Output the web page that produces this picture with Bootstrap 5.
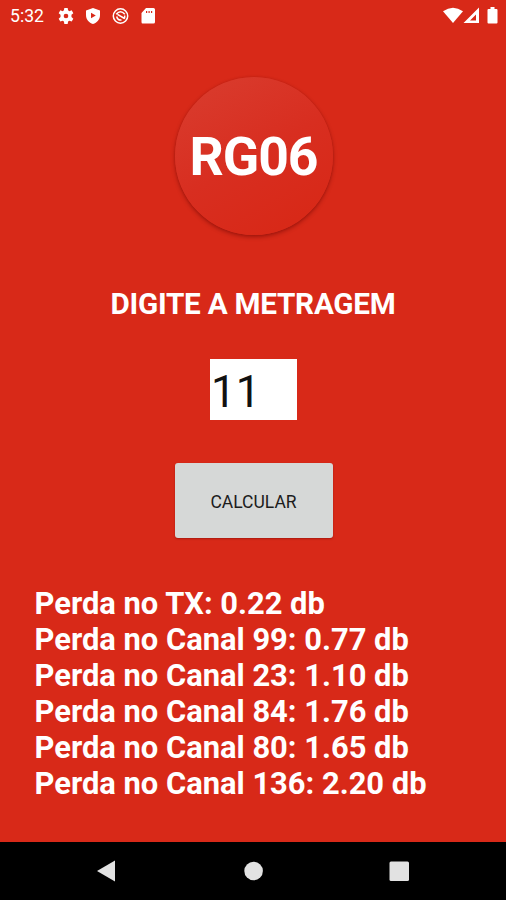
<!DOCTYPE html>
<html lang="pt-BR">
<head>
<meta charset="utf-8">
<meta name="viewport" content="width=device-width, initial-scale=1">
<title>RG06</title>
<link href="https://cdn.jsdelivr.net/npm/bootstrap@5.3.0/dist/css/bootstrap.min.css" rel="stylesheet">
<style>
body { font-family: Roboto, sans-serif; background: #d82918; height: 900px; overflow: hidden; }
.status-bar { height: 31px; padding: 0 7px 0 10px; }
.clock { font-size: 17.6px; line-height: 31px; width: 48px; padding-top: 1px; }
.status-icons { gap: 11px; }
.round-logo { width: 158px; height: 158px; margin: 46px 0 0 1px; font-size: 53.5px; letter-spacing: -1px; line-height: 1; padding-top: 2px;
  background: linear-gradient(150deg, #d93b2d 8%, #d82e20 50%, #d82918 85%);
  box-shadow: 0 2px 4px rgba(90, 0, 0, .45), 0 0 2px rgba(110, 0, 0, .2); }
.heading { font-size: 29.7px; letter-spacing: -.25px; line-height: 36px; margin-top: 51px; }
.meters { width: 87px; height: 61px; margin: 37px 0 0 1px; padding: 5px 0 0 1px; font-size: 44px; line-height: 1; color: #111; }
.meters, .meters:focus { background: #fff; box-shadow: none; }
.btn-calc { width: 158px; height: 75px; margin: 43px 0 0 1px; padding-top: 9px; border-radius: 3px; font-size: 17.5px; --bs-btn-bg: #d6d8d7;
  --bs-btn-color: #1c1c1c; --bs-btn-hover-bg: #c9cbca; box-shadow: 0 1px 2px rgba(100, 0, 0, .4); }
.results { margin-top: 48px; padding-left: 34.5px; font-size: 30.9px; line-height: 36.1px; }
.nav-keys { height: 58px; fill: #e2e2e2; }
</style>
</head>
<body class="d-flex flex-column text-white">
<header class="status-bar d-flex align-items-center justify-content-between flex-shrink-0">
  <div class="d-flex align-items-center">
    <span class="clock">5:32</span>
    <div class="status-icons d-flex">
      <svg width="16" height="16" viewBox="0 0 24 24" fill="#fff"><path fill-rule="evenodd" d="M9.500 0h5l.6 3.500 2 1.200 3.400-1.300L23 7.700l-2.800 2.300v3.500l2.800 2.500-2.500 4.400-3.400-1.300-2 1.300-.6 3.600h-5l-.6-3.600-2-1.300-3.400 1.300L1 16l2.800-2.500V10L1 7.700l2.500-4.300 3.400 1.300 2-1.200zM12 8.500a3.500 3.500 0 1 0 0 7 3.500 3.500 0 0 0 0-7z"/></svg>
      <svg width="16" height="16" viewBox="0 0 16 16" fill="#fff"><path fill-rule="evenodd" d="M8 0l7 2.500V7c0 4.500-3 7.800-7 9-4-1.200-7-4.500-7-9V2.500zM6 4.700v5.500L10.800 7.500z"/></svg>
      <svg width="17" height="16" viewBox="0 0 17 16" fill="none" stroke="#fff"><circle cx="8.500" cy="8" r="7.200" stroke-width="1.500"/><path d="M4.200 6.200Q8.500 1.200 12.800 6.200M5.500 6.300L12.500 10.500M4.700 8.500Q5.500 12.500 9.500 12M12.700 7.500Q13 9.500 12 10.800" stroke-width="1.500"/></svg>
      <svg width="16" height="16" viewBox="0 0 16 16" fill="#fff"><path fill-rule="evenodd" d="M6 0h7.500Q15 0 15 1.500v12.500Q15 15.500 13.500 15.500h-11Q1.500 15.500 1.500 14V5zM6 3v2h1.200V3zM8.500 3v2h1.200V3zM11 3v2h1.200V3z"/></svg>
    </div>
  </div>
  <svg width="56" height="17" viewBox="0 0 56 17" fill="#fff"><path d="M0 4.300Q10 -2.800 20 4.300L10 16z"/><path fill-rule="evenodd" d="M36 .5V16H20.500zM33 7.500v6H27z"/><path d="M47.500 0h4v2h2q1 0 1 1v12.500q0 1-1 1h-8q-1 0-1-1V3q0-1 1-1h2z"/></svg>
</header>
<main class="flex-grow-1 d-flex flex-column align-items-center">
  <div class="round-logo rounded-circle d-flex align-items-center justify-content-center fw-bold flex-shrink-0">RG06</div>
  <h1 class="heading fw-bold mb-0">DIGITE A METRAGEM</h1>
  <input class="meters form-control border-0 rounded-0 flex-shrink-0" type="text" value="11" aria-label="Metragem">
  <button class="btn btn-calc border-0 flex-shrink-0" type="button">CALCULAR</button>
  <div class="results fw-bold align-self-start text-nowrap">
    <div>Perda no TX: 0.22 db</div>
    <div>Perda no Canal 99: 0.77 db</div>
    <div>Perda no Canal 23: 1.10 db</div>
    <div>Perda no Canal 84: 1.76 db</div>
    <div>Perda no Canal 80: 1.65 db</div>
    <div>Perda no Canal 136: 2.20 db</div>
  </div>
</main>
<footer class="nav-keys bg-black flex-shrink-0">
  <svg class="d-block" width="506" height="58" viewBox="0 0 506 58"><path d="M97 29l18-10.500v21z"/><circle cx="253.600" cy="29" r="9.300"/><rect x="389.500" y="19.500" width="19.500" height="19.500" rx="1.500"/></svg>
</footer>
<script src="https://cdn.jsdelivr.net/npm/bootstrap@5.3.0/dist/js/bootstrap.bundle.min.js"></script>
</body>
</html>
